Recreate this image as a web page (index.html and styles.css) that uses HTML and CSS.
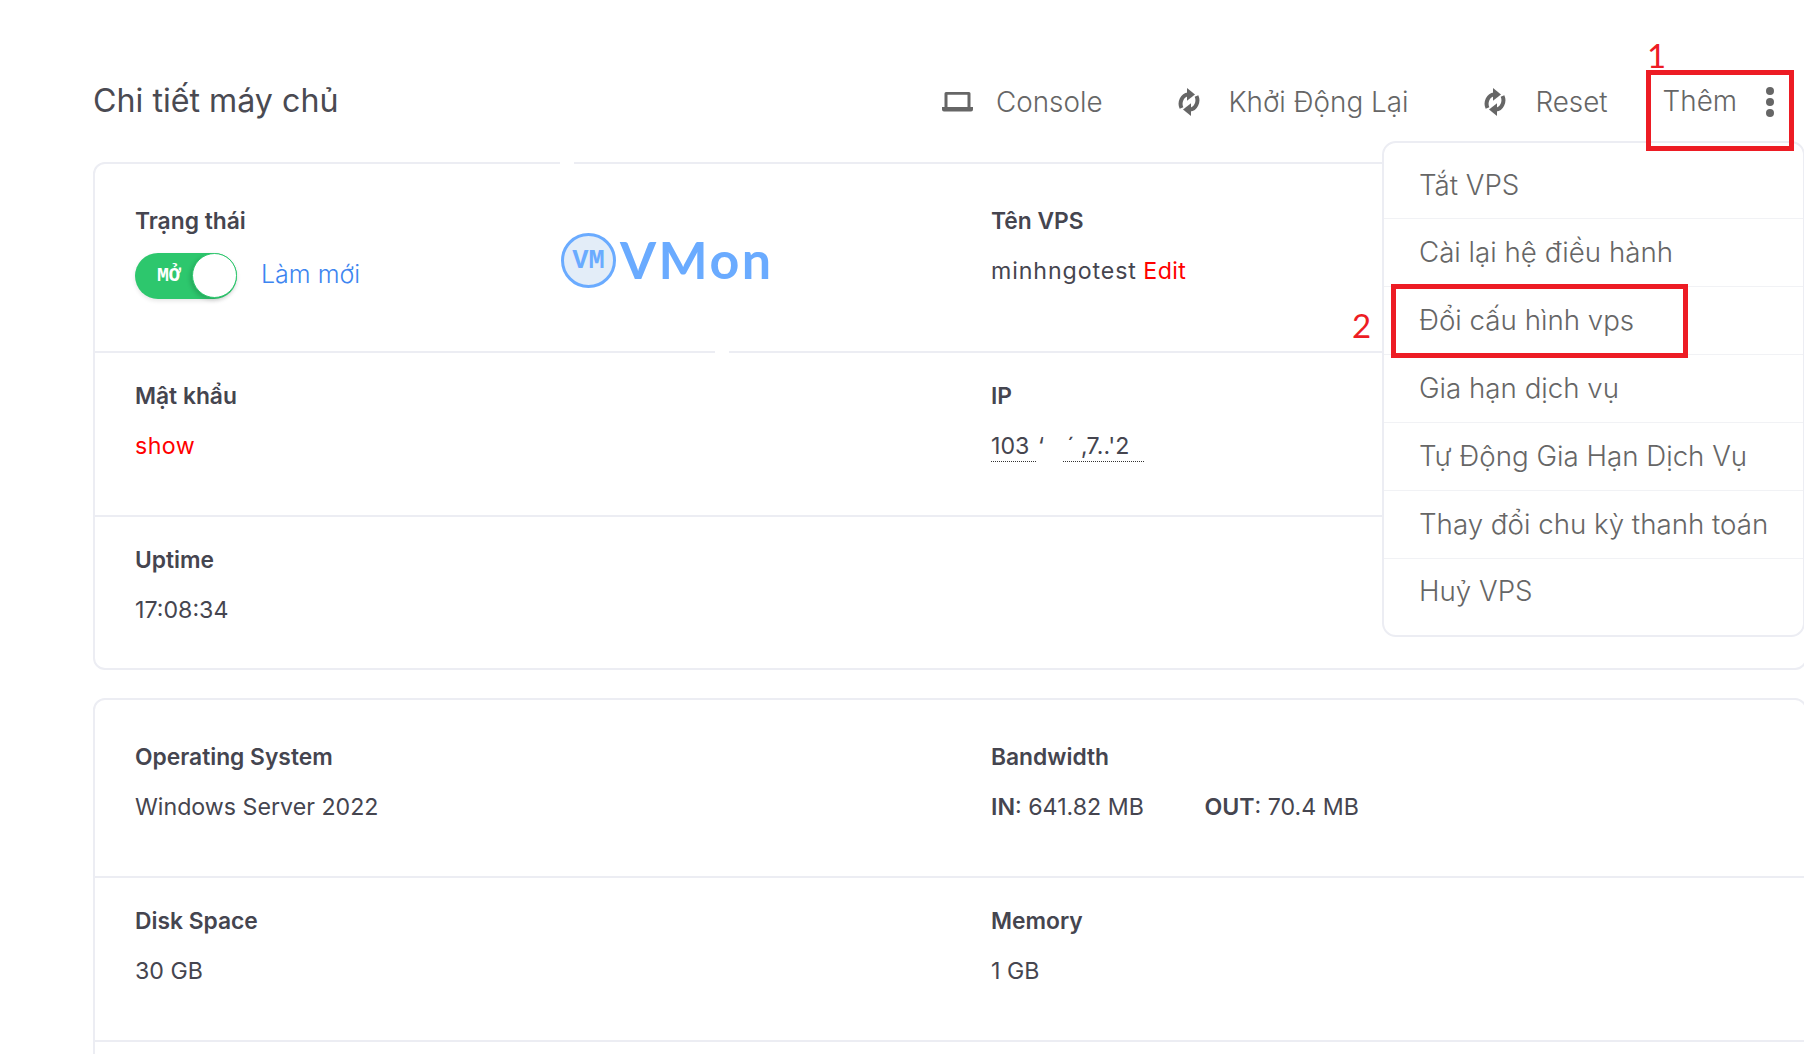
FILE: index.html
```html
<!DOCTYPE html>
<html lang="vi">
<head>
    <meta charset="UTF-8">
    <title>Chi tiết máy chủ</title>
    <link rel="stylesheet" href="styles.css">
</head>
<body>
    <div class="page">
        <div class="topbar">
            <h1 class="title">Chi tiết máy chủ</h1>
            <div class="actions">
                <a class="action action-console">
                    <svg class="icon-laptop" viewBox="0 0 31 20"><path d="M4 0h23a1.500 1.500 0 0 1 1.500 1.500V15H31v2.500a2 2 0 0 1-2 2H2a2 2 0 0 1-2-2V15h2.500V1.500A1.500 1.500 0 0 1 4 0zm1.500 2.800V15h20V2.800z" fill="#666"/></svg>
                    Console
                </a>
                <a class="action action-reboot">
                    <svg class="icon-sync" viewBox="0 0 22 28"><path d="M3.500 20C.8 14 4.500 6.800 10 6.400" fill="none" stroke="#666" stroke-width="4"/><path d="M9 0l8 6.400-8 6.400z" fill="#666"/><path d="M18.500 8C21.200 14 17.500 21.200 12 21.600" fill="none" stroke="#666" stroke-width="4"/><path d="M13 28l-8-6.400 8-6.400z" fill="#666"/></svg>
                    Khởi Động Lại
                </a>
                <a class="action action-reset">
                    <svg class="icon-sync" viewBox="0 0 22 28"><path d="M3.500 20C.8 14 4.500 6.800 10 6.400" fill="none" stroke="#666" stroke-width="4"/><path d="M9 0l8 6.400-8 6.400z" fill="#666"/><path d="M18.500 8C21.200 14 17.500 21.200 12 21.600" fill="none" stroke="#666" stroke-width="4"/><path d="M13 28l-8-6.400 8-6.400z" fill="#666"/></svg>
                    Reset
                </a>
                <a class="action action-more">
                    Thêm
                    <span class="dots"><i></i><i></i><i></i></span>
                </a>
            </div>
        </div>

        <div class="card">
            <div class="row row-first row-status">
                <div class="col">
                    <div class="label">Trạng thái</div>
                    <div class="status-line">
                        <span class="toggle"><span class="toggle-text">MỞ</span><span class="toggle-knob"></span></span>
                        <a class="refresh">Làm mới</a>
                    </div>
                </div>
                <div class="col">
                    <div class="label">Tên VPS</div>
                    <div class="value"><span class="vps-name">minhngotest</span> <a class="red">Edit</a></div>
                </div>
            </div>
            <div class="row row-pass">
                <div class="col">
                    <div class="label">Mật khẩu</div>
                    <div class="value"><a class="red">show</a></div>
                </div>
                <div class="col">
                    <div class="label">IP</div>
                    <div class="value ip"><span class="ip-part ip-a">103</span><span class="ip-gap">‘</span><span class="ip-part ip-b">´ ‚7..'2</span></div>
                </div>
            </div>
            <div class="row row-up">
                <div class="col">
                    <div class="label">Uptime</div>
                    <div class="value">17:08:34</div>
                </div>
            </div>
        </div>

        <div class="card card-specs">
            <div class="row row-first row-os">
                <div class="col">
                    <div class="label">Operating System</div>
                    <div class="value">Windows Server 2022</div>
                </div>
                <div class="col">
                    <div class="label">Bandwidth</div>
                    <div class="value"><b>IN</b>: 641.82 MB <span class="out"><b>OUT</b>: 70.4 MB</span></div>
                </div>
            </div>
            <div class="row row-disk">
                <div class="col">
                    <div class="label">Disk Space</div>
                    <div class="value">30 GB</div>
                </div>
                <div class="col">
                    <div class="label">Memory</div>
                    <div class="value">1 GB</div>
                </div>
            </div>
            <div class="row row-last"></div>
        </div>

        <div class="logo">
            <span class="logo-badge">VM</span>
            <span class="logo-name">VMon</span>
        </div>
        <i class="notch notch-top"></i>
        <i class="notch notch-bottom"></i>

        <ul class="menu">
            <li>Tắt VPS</li>
            <li>Cài lại hệ điều hành</li>
            <li>Đổi cấu hình vps</li>
            <li>Gia hạn dịch vụ</li>
            <li>Tự Động Gia Hạn Dịch Vụ</li>
            <li>Thay đổi chu kỳ thanh toán</li>
            <li>Huỷ VPS</li>
        </ul>

        <div class="mark mark-more"></div>
        <div class="mark mark-item"></div>
        <span class="mark-num num-1">1</span>
        <span class="mark-num num-2">2</span>
    </div>
</body>
</html>
```
FILE: styles.css
```css
*{margin: 0; padding: 0; box-sizing: border-box}
html,body{ height: 100%; overflow: hidden; background: #fff; }
body{ font-family: "Inter", "Noto Sans", sans-serif; color: #45454f; }
a{ text-decoration: none; }
ul{ list-style: none; }

.page{ position: relative; width: 1714px; margin-left: 93px; }

/* header */
.topbar{ display: flex; align-items: center; justify-content: space-between; height: 162px; padding-top: 38px; }
.title{ font-size: 32.2px; font-weight: 400; color: #4a4a52; }
.actions{ display: flex; align-items: center; padding-right: 33px; padding-top: 4px; }
.action{ display: flex; align-items: center; font-size: 27.8px; font-weight: 300; color: #666; }
.icon-laptop{ width: 31px; height: 20px; margin-right: 23px; }
.icon-sync{ width: 22px; height: 28px; margin-right: 29px; }
.action-console{ margin-right: 75px; }
.action-reboot{ margin-right: 76px; }
.action-reset{ margin-right: 55px; }
.action-more{ margin-top: -2px; }
.dots{ display: flex; flex-direction: column; gap: 3px; margin-left: 29px; margin-top: 2px; }
.dots i{ display: block; width: 8px; height: 8px; border-radius: 50%; background: #666; }

/* cards */
.card{ border: 2px solid #ecedf3; border-radius: 12px; margin-bottom: 28px; }
.card-specs{ margin-bottom: 0; }
.row{ display: grid; grid-template-columns: 856px 1fr; padding: 28px 0 0 40px; border-bottom: 2px solid #ecedf3; }
.row-first{ padding-top: 42px; }
.row:last-child{ border-bottom: 0; }
.row-status{ height: 189px; }
.row-pass{ height: 164px; }
.row-up{ height: 151px; }
.row-os{ height: 178px; }
.row-disk{ height: 164px; }
.row-last{ height: 120px; }

.label{ font-size: 22.8px; line-height: 30px; font-weight: 600; color: #45454f; }
.value{ margin-top: 19px; font-size: 23.2px; line-height: 32px; font-weight: 400; color: #45454f; }
.value b{ font-weight: 600; }
.vps-name{ letter-spacing: .9px; }
.out{ margin-left: 54px; }
.red{ color: #f00; letter-spacing: .4px; }

.status-line{ display: flex; align-items: center; margin-top: 17px; }
.toggle{ position: relative; display: block; width: 102px; height: 46px; border-radius: 23px; background: #2dc76d; box-shadow: 0 2px 4px rgba(0,0,0,.1); }
.toggle-text{ position: absolute; left: 22px; top: 10px; font-family: "Liberation Mono", monospace; font-size: 20px; line-height: 26px; font-weight: 700; color: #fff; letter-spacing: -.5px; }
.toggle-knob{ position: absolute; right: 0; top: 0; width: 45px; height: 45px; border-radius: 50%; background: #fff; border: 1px solid #2dc76d; box-shadow: -2px 2px 4px rgba(0,0,0,.15); }
.refresh{ margin-left: 24px; margin-top: -4px; font-size: 25px; font-weight: 300; color: #3d85f0; }

.ip{ display: flex; }
.ip-part{ display: block; height: 32px; border-bottom: 1px dotted #333; overflow: hidden; }
.ip-a{ width: 45px; }
.ip-b{ width: 81px; padding-left: 4px; white-space: pre; }
.ip-gap{ width: 27px; padding-left: 2px; }

/* logo image lies over the first card */
.logo{ position: absolute; left: 468px; top: 231px; display: flex; align-items: center; }
.logo-badge{ display: block; width: 55px; height: 55px; border-radius: 50%; background: #e3edf8; border: 3px solid #6aabff; text-align: center; font-family: "Liberation Mono", monospace; font-size: 27px; line-height: 50px; font-weight: 700; color: #6aabff; }
.logo-name{ margin: -2px 0 0 4px; font-family: "Lato", sans-serif; font-size: 52px; line-height: 60px; font-weight: 700; color: #6aabff; letter-spacing: 2.5px; }
.notch{ position: absolute; display: block; width: 14px; height: 4px; background: #fff; }
.notch-top{ left: 467px; top: 161px; }
.notch-bottom{ left: 622px; top: 350px; }

/* dropdown */
.menu{ position: absolute; left: 1289px; top: 141px; width: 423px; height: 496px; background: #fff; border: 2px solid #ecedf3; border-radius: 14px; }
.menu li{ display: flex; align-items: center; height: 68px; padding: 0 0 2px 35px; font-size: 27.7px; font-weight: 300; color: #666; border-bottom: 1px solid #f1f2f5; }
.menu li:first-child{ height: 76px; padding-top: 8px; padding-bottom: 0; }
.menu li:last-child{ border-bottom: 0; padding-bottom: 4px; }

/* red marks of the annotated screenshot */
.mark{ position: absolute; border: 5px solid #ed1c24; }
.mark-more{ left: 1553px; top: 70px; width: 148px; height: 81px; }
.mark-item{ left: 1298px; top: 284px; width: 297px; height: 74px; }
.mark-num{ position: absolute; font-family: "Lato", sans-serif; font-size: 33px; line-height: 36px; color: #ed1c24; }
.num-1{ left: 1554px; top: 37px; }
.num-2{ left: 1259px; top: 307px; }
```
